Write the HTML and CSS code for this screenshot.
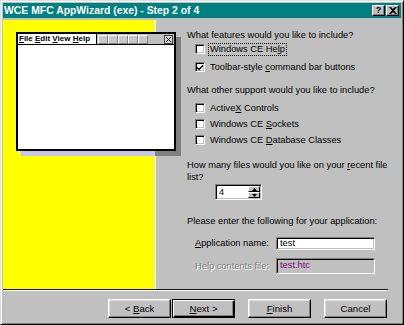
FILE: index.html
```html
<!DOCTYPE html>
<html lang="en">
<head>
    <meta charset="UTF-8">
    <title>WCE MFC AppWizard (exe) - Step 2 of 4</title>
    <link rel="stylesheet" href="styles.css">
</head>
<body>
    <div class="dialog">
        <div class="titlebar">
            <span class="title">WCE MFC AppWizard (exe) - Step 2 of 4</span>
            <div class="caption-btns">
                <span class="cap-btn help">?</span>
                <span class="cap-btn">
                    <svg width="8" height="7" viewBox="0 0 8 7"><path d="M0 0h2l2 2 2-2h2L5 3.5 8 7H6L4 5 2 7H0l3-3.5z" fill="#000"/></svg>
                </span>
            </div>
        </div>

        <div class="main">
            <div class="art">
                <div class="preview-shadow"></div>
                <div class="preview">
                    <div class="preview-bar">
                        <div class="preview-menu"><u>F</u>ile <u>E</u>dit <u>V</u>iew <u>H</u>elp</div>
                        <div class="preview-tools">
                            <span class="tool"></span>
                            <span class="tool"></span>
                            <span class="tool"></span>
                            <span class="tool"></span>
                            <span class="tool"></span>
                            <span class="preview-close">
                                <svg width="5" height="5" viewBox="0 0 5 5"><path d="M0 0L5 5M5 0L0 5" stroke="#000" stroke-width="1"/></svg>
                            </span>
                        </div>
                    </div>
                </div>
            </div>

            <div class="options">
                <p class="question">What features would you like to include?</p>
                <div class="check-row">
                    <span class="checkbox"></span>
                    <span class="label focus">Windows CE He<u>l</u>p</span>
                </div>
                <div class="check-row tight">
                    <span class="checkbox">
                        <svg width="8" height="8" viewBox="0 0 8 8"><path d="M1 3.5l2 2L7 1.5v2L3 7.5l-2-2z" fill="#000"/></svg>
                    </span>
                    <span class="label">Toolbar-style <u>c</u>ommand bar buttons</span>
                </div>

                <p class="question second">What other support would you like to include?</p>
                <div class="check-row group">
                    <span class="checkbox"></span>
                    <span class="label">Active<u>X</u> Controls</span>
                </div>
                <div class="check-row group">
                    <span class="checkbox"></span>
                    <span class="label">Windows CE <u>S</u>ockets</span>
                </div>
                <div class="check-row group">
                    <span class="checkbox"></span>
                    <span class="label">Windows CE <u>D</u>atabase Classes</span>
                </div>

                <p class="question files">How many files would you like on your <u>r</u>ecent file<br>list?</p>
                <div class="spin">
                    <span class="spin-value">4</span>
                    <div class="spin-arrows">
                        <span class="spin-btn"><svg width="5" height="3" viewBox="0 0 5 3"><path d="M2.5 0L5 3H0z" fill="#000"/></svg></span>
                        <span class="spin-btn"><svg width="5" height="3" viewBox="0 0 5 3"><path d="M0 0h5L2.5 3z" fill="#000"/></svg></span>
                    </div>
                </div>

                <p class="question enter">Please enter the following for your application:</p>
                <div class="field-row">
                    <span class="field-label"><u>A</u>pplication name:</span>
                    <span class="field">test</span>
                </div>
                <div class="field-row disabled">
                    <span class="field-label">Help contents file:</span>
                    <span class="field tall">test.htc</span>
                </div>
            </div>
        </div>

        <div class="separator"></div>

        <div class="buttons">
            <span class="btn"><span>&lt; <u>B</u>ack</span></span>
            <span class="btn default"><span><u>N</u>ext &gt;</span></span>
            <span class="btn spaced"><span><u>F</u>inish</span></span>
            <span class="btn spaced"><span>Cancel</span></span>
        </div>
    </div>
</body>
</html>
```

FILE: styles.css
```css
* {
    box-sizing: border-box;
}

body {
    margin: 0;
    background: #c0c0c0;
    font-family: "Liberation Sans", Arial, sans-serif;
    font-size: 9.3px;
    color: #000;
}

p {
    margin: 0;
}

.dialog {
    width: 404px;
    height: 325px;
    background: #c0c0c0;
    border: 1px solid;
    border-color: #dfdfdf #000 #000 #dfdfdf;
    box-shadow: inset 1px 1px 0 #fff, inset -1px -1px 0 #808080;
    padding: 2px;
    display: flex;
    flex-direction: column;
}

/* title bar */
.titlebar {
    height: 15px;
    background: #008080;
    display: flex;
    align-items: center;
    justify-content: space-between;
    padding: 0 0 0 1px;
    margin-bottom: 2px;
}

.title {
    color: #fff;
    font-weight: bold;
    font-size: 10.4px;
}

.caption-btns {
    display: flex;
    margin-right: 2px;
}

.cap-btn {
    width: 13px;
    height: 11px;
    background: #c0c0c0;
    border: 1px solid;
    border-color: #fff #000 #000 #fff;
    box-shadow: inset -1px -1px 0 #808080;
    display: flex;
    align-items: center;
    justify-content: center;
    font-weight: bold;
    font-size: 9px;
    line-height: 1;
}

.cap-btn.help {
    margin-right: 1px;
}

/* main area */
.main {
    height: 269px;
    display: flex;
}

.art {
    width: 153px;
    background: #ffff00;
    border-right: 1px solid #fff;
    position: relative;
}

.preview-shadow {
    position: absolute;
    left: 18px;
    top: 17px;
    width: 160px;
    height: 119px;
    background: linear-gradient(to right, #c6c6ee 134px, #808080 134px);
    z-index: 1;
}

.preview {
    position: absolute;
    left: 13px;
    top: 12px;
    width: 160px;
    height: 119px;
    background: #fff;
    border: 2px solid #000;
    z-index: 2;
}

.preview-bar {
    height: 11px;
    display: flex;
    border-bottom: 1px solid #000;
}

.preview-menu {
    width: 78px;
    padding-left: 1px;
    font-size: 8px;
    font-weight: bold;
    line-height: 10px;
    white-space: nowrap;
}

.preview-tools {
    flex: 1;
    background: #c0c0c0;
    border-left: 1px solid #000;
    display: flex;
    align-items: center;
    padding-left: 1px;
}

.tool {
    width: 10px;
    height: 9px;
    background: #c8c8c8;
    border: 1px solid;
    border-color: #fff #808080 #808080 #fff;
}

.preview-close {
    margin-left: auto;
    margin-right: 1px;
    width: 9px;
    height: 9px;
    background: #d8d8d8;
    border: 1px solid #404040;
    display: flex;
    align-items: center;
    justify-content: center;
}

/* options */
.options {
    flex: 1;
    padding: 10px 0 0 31px;
    line-height: 11px;
    white-space: nowrap;
}

.check-row {
    height: 16px;
    display: flex;
    align-items: center;
    padding-left: 8px;
}

.check-row.tight {
    margin-top: 2px;
}

.question.second {
    margin-top: 10px;
    margin-bottom: 4px;
}

.checkbox {
    width: 10px;
    height: 10px;
    background: #fff;
    border: 1px solid;
    border-color: #808080 #fff #fff #808080;
    box-shadow: inset 1px 1px 0 #000, inset -1px -1px 0 #c0c0c0;
    display: flex;
    align-items: center;
    justify-content: center;
    margin-right: 5px;
}

.label.focus {
    outline: 1px dotted #000;
    padding: 0 1px;
    margin-left: -1px;
}

.question.files {
    margin-top: 11px;
    line-height: 12px;
}

.spin {
    margin: 1px 0 0 28px;
    width: 47px;
    height: 16px;
    background: #fff;
    border: 1px solid;
    border-color: #808080 #fff #fff #808080;
    box-shadow: inset 1px 1px 0 #000, inset -1px -1px 0 #c0c0c0;
    display: flex;
    justify-content: space-between;
    padding: 1px 1px 1px 3px;
}

.spin-value {
    line-height: 13px;
}

.spin-arrows {
    width: 12px;
    display: flex;
    flex-direction: column;
}

.spin-btn {
    flex: 1;
    background: #c0c0c0;
    border: 1px solid;
    border-color: #fff #000 #000 #fff;
    display: flex;
    align-items: center;
    justify-content: center;
}

.question.enter {
    margin-top: 16px;
}

.field-row {
    display: flex;
    align-items: center;
    padding-left: 8px;
    margin-top: 10px;
}

.field-row.disabled {
    margin-top: 8px;
}

.field-label {
    width: 81px;
}

.disabled .field-label {
    color: #808080;
    text-shadow: 1px 1px 0 #fff;
}

.field {
    width: 99px;
    height: 13px;
    background: #fff;
    border: 1px solid;
    border-color: #808080 #fff #fff #808080;
    box-shadow: inset 1px 1px 0 #000, inset -1px -1px 0 #c0c0c0;
    padding-left: 3px;
    line-height: 11px;
}

.field.tall {
    height: 16px;
    line-height: 13px;
    background: #c0c0c0;
    color: #800080;
}

/* bottom */
.separator {
    height: 2px;
    margin-right: 13px;
    border-top: 1px solid #101010;
    border-bottom: 1px solid #fff;
}

.buttons {
    margin-top: 8px;
    display: flex;
    justify-content: flex-end;
    padding-right: 14px;
    gap: 1px;
}

.btn {
    width: 63px;
    height: 19px;
    border: 1px solid;
    border-color: #fff #000 #000 #fff;
    box-shadow: inset -1px -1px 0 #808080, inset 1px 1px 0 #dfdfdf;
    display: flex;
    align-items: center;
    justify-content: center;
    font-size: 9.6px;
}

.btn.default {
    border-color: #000;
    box-shadow: inset 1px 1px 0 #fff, inset -1px -1px 0 #000, inset -2px -2px 0 #808080;
}

.btn.spaced {
    margin-left: 12px;
}
```
